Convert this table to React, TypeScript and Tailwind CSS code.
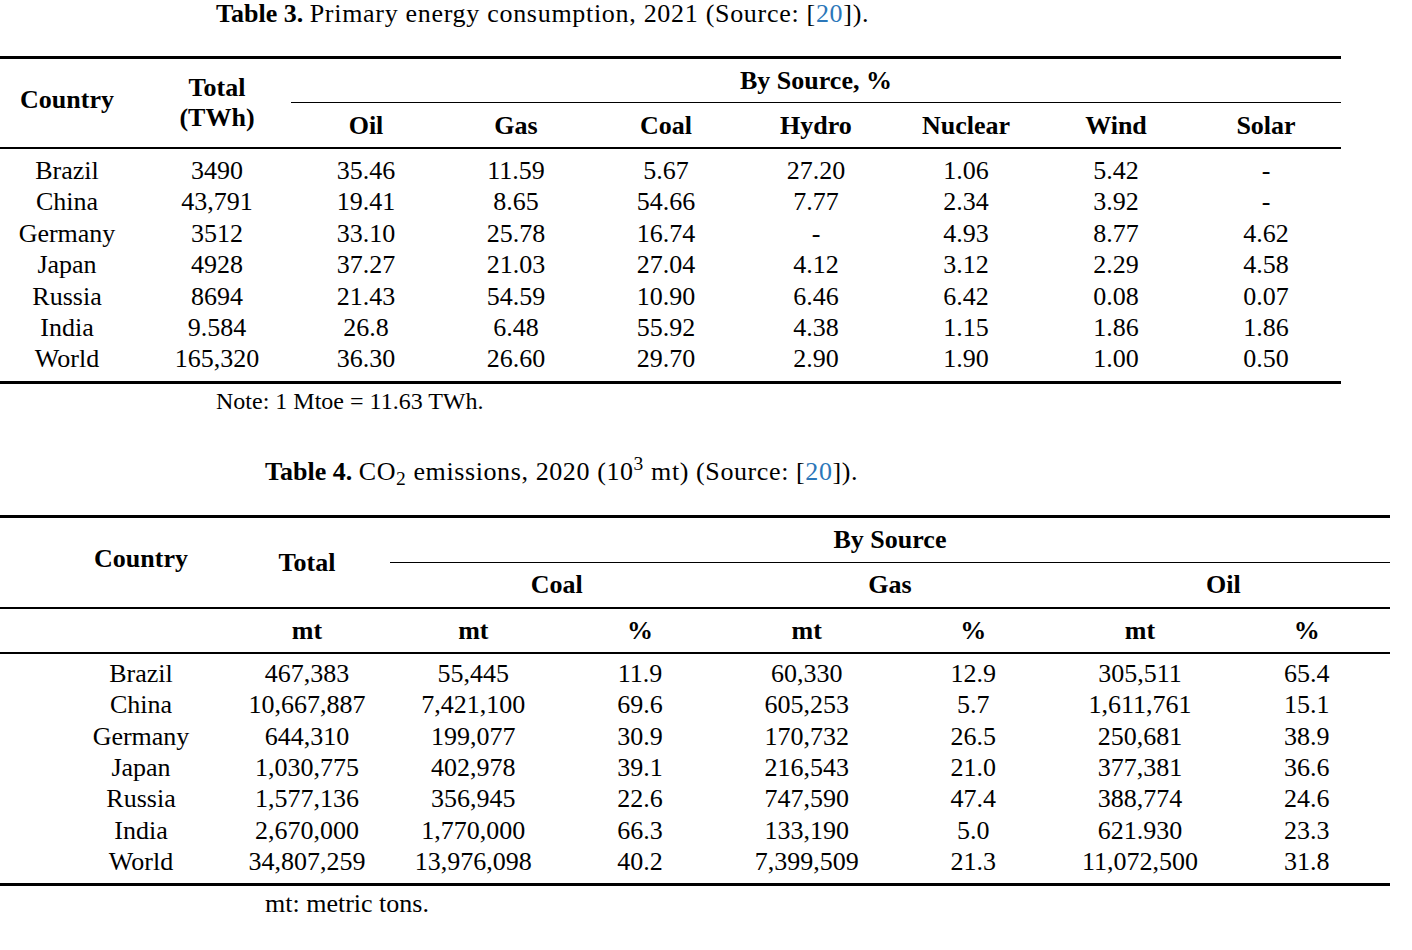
const energy = [
  ["Brazil", "3490", "35.46", "11.59", "5.67", "27.20", "1.06", "5.42", "-"],
  ["China", "43,791", "19.41", "8.65", "54.66", "7.77", "2.34", "3.92", "-"],
  ["Germany", "3512", "33.10", "25.78", "16.74", "-", "4.93", "8.77", "4.62"],
  ["Japan", "4928", "37.27", "21.03", "27.04", "4.12", "3.12", "2.29", "4.58"],
  ["Russia", "8694", "21.43", "54.59", "10.90", "6.46", "6.42", "0.08", "0.07"],
  ["India", "9.584", "26.8", "6.48", "55.92", "4.38", "1.15", "1.86", "1.86"],
  ["World", "165,320", "36.30", "26.60", "29.70", "2.90", "1.90", "1.00", "0.50"],
];

const emissions = [
  ["Brazil", "467,383", "55,445", "11.9", "60,330", "12.9", "305,511", "65.4"],
  ["China", "10,667,887", "7,421,100", "69.6", "605,253", "5.7", "1,611,761", "15.1"],
  ["Germany", "644,310", "199,077", "30.9", "170,732", "26.5", "250,681", "38.9"],
  ["Japan", "1,030,775", "402,978", "39.1", "216,543", "21.0", "377,381", "36.6"],
  ["Russia", "1,577,136", "356,945", "22.6", "747,590", "47.4", "388,774", "24.6"],
  ["India", "2,670,000", "1,770,000", "66.3", "133,190", "5.0", "621.930", "23.3"],
  ["World", "34,807,259", "13,976,098", "40.2", "7,399,509", "21.3", "11,072,500", "31.8"],
];

function EnergyTable() {
  return (
    <section>
      <p className="h-[28px] pl-[216px] leading-[28px] whitespace-nowrap">
        <b>Table 3.</b>{" "}
        <span className="tracking-[0.7px]">
          Primary energy consumption, 2021 (Source: [<span className="text-[#2b77b9]">20</span>]).
        </span>
      </p>

      <div className="mt-[28px] h-[3px] w-[1341px] bg-black" />
      <div className="flex w-[1341px] font-bold">
        <div className="flex w-[134px] items-center justify-center pb-[7px]">Country</div>
        <div className="flex w-[157px] flex-col items-center justify-center pl-[9px] leading-[30px]">
          <span>Total</span>
          <span>(TWh)</span>
        </div>
        <div className="flex w-[1050px] flex-col">
          <div className="flex h-[43px] items-center justify-center">By Source, %</div>
          <div className="h-px bg-black" />
          <div className="grid h-[44px] grid-cols-7 items-center text-center">
            {["Oil", "Gas", "Coal", "Hydro", "Nuclear", "Wind", "Solar"].map((h) => (
              <span key={h}>{h}</span>
            ))}
          </div>
        </div>
      </div>
      <div className="h-[2px] w-[1341px] bg-black" />

      <div className="w-[1341px] pt-[6px] pb-[6px]">
        {energy.map((row) => (
          <div
            key={row[0]}
            className="grid h-[31.4px] grid-cols-[134px_157px_repeat(7,150px)] items-center text-center leading-[31.4px]"
          >
            {row.map((cell, i) => (
              <span key={i} className={i === 1 ? "pl-[9px]" : ""}>
                {cell}
              </span>
            ))}
          </div>
        ))}
      </div>
      <div className="h-[3px] w-[1341px] bg-black" />
      <p className="mt-[3px] h-[28px] pl-[216px] text-[24px] leading-[28px]">Note: 1 Mtoe = 11.63 TWh.</p>
    </section>
  );
}

function EmissionsTable() {
  return (
    <section className="mt-[43px]">
      <p className="h-[28px] pl-[265px] leading-[28px] whitespace-nowrap">
        <b>Table 4.</b>{" "}
        <span className="tracking-[0.6px]">
          CO<sub>2</sub> emissions, 2020 (10<sup>3</sup> mt) (Source: [
          <span className="text-[#2b77b9]">20</span>]).
        </span>
      </p>

      <div className="mt-[29px] h-[3px] w-[1390px] bg-black" />
      <div className="flex w-[1390px] font-bold">
        <div className="flex w-[224px] items-center justify-center pl-[58px] pb-[7px]">Country</div>
        <div className="flex w-[166px] items-center justify-center">Total</div>
        <div className="flex w-[1000px] flex-col">
          <div className="flex h-[44px] items-center justify-center">By Source</div>
          <div className="h-px bg-black" />
          <div className="grid h-[44px] grid-cols-3 items-center text-center">
            <span>Coal</span>
            <span>Gas</span>
            <span>Oil</span>
          </div>
        </div>
      </div>
      <div className="h-[2px] w-[1390px] bg-black" />
      <div className="grid h-[43px] w-[1390px] grid-cols-[224px_166px_repeat(6,1fr)] items-center text-center font-bold">
        <span />
        <span>mt</span>
        <span>mt</span>
        <span>%</span>
        <span>mt</span>
        <span>%</span>
        <span>mt</span>
        <span>%</span>
      </div>
      <div className="h-[2px] w-[1390px] bg-black" />

      <div className="w-[1390px] pt-[4px] pb-[6px]">
        {emissions.map((row) => (
          <div
            key={row[0]}
            className="grid h-[31.4px] grid-cols-[224px_166px_repeat(6,1fr)] items-center text-center leading-[31.4px]"
          >
            {row.map((cell, i) => (
              <span key={i} className={i === 0 ? "pl-[58px]" : ""}>
                {cell}
              </span>
            ))}
          </div>
        ))}
      </div>
      <div className="h-[3px] w-[1390px] bg-black" />
      <p className="mt-[4px] h-[28px] pl-[265px] leading-[28px]">mt: metric tons.</p>
    </section>
  );
}

export default function App() {
  return (
    <main className="h-[950px] w-[1412px] overflow-hidden bg-white font-['Liberation_Serif','Times_New_Roman',serif] text-[26px] text-black">
      <EnergyTable />
      <EmissionsTable />
    </main>
  );
}
